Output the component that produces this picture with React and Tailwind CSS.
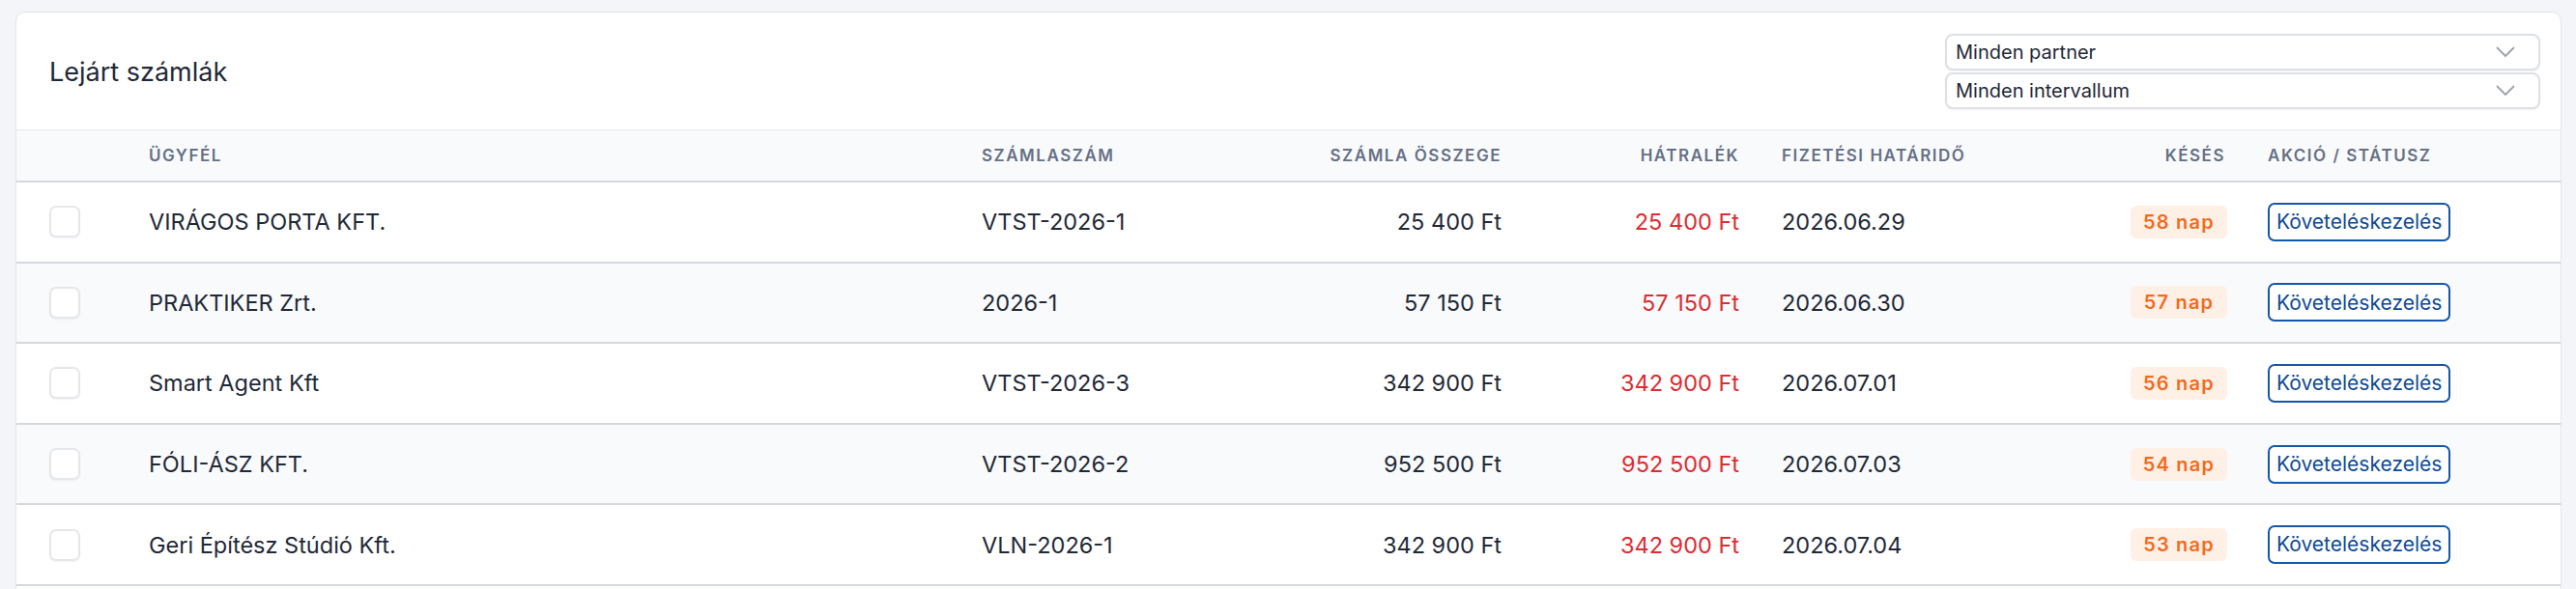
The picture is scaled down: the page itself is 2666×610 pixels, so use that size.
import React from "react";

const rows = [
  { name: "VIRÁGOS PORTA KFT.", num: "VTST-2026-1", amount: "25 400 Ft", due: "25 400 Ft", date: "2026.06.29", late: "58 nap" },
  { name: "PRAKTIKER Zrt.", num: "2026-1", amount: "57 150 Ft", due: "57 150 Ft", date: "2026.06.30", late: "57 nap" },
  { name: "Smart Agent Kft", num: "VTST-2026-3", amount: "342 900 Ft", due: "342 900 Ft", date: "2026.07.01", late: "56 nap" },
  { name: "FÓLI-ÁSZ KFT.", num: "VTST-2026-2", amount: "952 500 Ft", due: "952 500 Ft", date: "2026.07.03", late: "54 nap" },
  { name: "Geri Építész Stúdió Kft.", num: "VLN-2026-1", amount: "342 900 Ft", due: "342 900 Ft", date: "2026.07.04", late: "53 nap" },
];

function Chevron() {
  return (
    <svg width="20" height="12" viewBox="0 0 20 12" fill="none">
      <polyline points="1.5,1.5 10,10 18.5,1.5" stroke="#9ca3af" strokeWidth="1.8" strokeLinecap="round" strokeLinejoin="round" />
    </svg>
  );
}

function Select({ label }) {
  return (
    <div className="flex h-[38px] items-center justify-between rounded-[8px] border-2 border-[#dde0e5] bg-white pl-[9px] pr-[24px] shadow-[0_1px_2px_rgba(0,0,0,0.06)]">
      <span className="text-[20px] text-[#1f2937]">{label}</span>
      <Chevron />
    </div>
  );
}

export default function App() {
  return (
    <div className="min-h-screen bg-[#f4f5f8] pl-[16px] pr-[15px] pt-[12px] font-['Inter',sans-serif]">
      <div className="overflow-hidden rounded-[10px] border border-[#e3e5ea] bg-white">
        <div className="flex items-center justify-between border-b border-[#e5e7eb] pb-[21px] pl-[34px] pr-[21px] pt-[22px]">
          <h2 className="text-[27px] font-normal leading-none text-[#1f2937]">Lejárt számlák</h2>
          <div className="flex w-[616px] flex-col gap-[2px]">
            <Select label="Minden partner" />
            <Select label="Minden intervallum" />
          </div>
        </div>

        <div className="flex h-[54px] items-center border-b-2 border-[#d5d8de] bg-[#f9fafc] pt-[2px] text-[17px] font-semibold uppercase tracking-[0.09em] text-[#667085]">
          <div className="w-[120px] shrink-0" />
          <div className="w-[863px] shrink-0 pl-[17px]">Ügyfél</div>
          <div className="w-[300px] shrink-0 pl-[16px]">Számlaszám</div>
          <div className="w-[274px] shrink-0 pr-[20px] text-right">Számla összege</div>
          <div className="w-[246px] shrink-0 pr-[20px] text-right">Hátralék</div>
          <div className="w-[280px] shrink-0 pl-[24px]">Fizetési határidő</div>
          <div className="w-[225px] shrink-0 pr-[22px] text-right">Késés</div>
          <div className="flex-1 pl-[22px]">Akció / Státusz</div>
        </div>

        {rows.map((r, i) => (
          <div
            key={i}
            className={`flex h-[83.6px] items-center border-b-2 border-[#d5d8de] text-[23.5px] text-[#1f2937] ${i % 2 === 1 ? "bg-[#f9fafc]" : "bg-white"}`}
          >
            <div className="w-[120px] shrink-0 pl-[34px]">
              <div className="h-[33px] w-[32px] rounded-[7px] border-2 border-[#e5e7eb] bg-white shadow-[0_1px_2px_rgba(0,0,0,0.05)]" />
            </div>
            <div className="w-[863px] shrink-0 pl-[17px]">{r.name}</div>
            <div className="w-[300px] shrink-0 pl-[16px]">{r.num}</div>
            <div className="w-[274px] shrink-0 pr-[20px] text-right">{r.amount}</div>
            <div className="w-[246px] shrink-0 pr-[20px] text-right text-[#dc2d32]">{r.due}</div>
            <div className="w-[280px] shrink-0 pl-[24px]">{r.date}</div>
            <div className="flex w-[225px] shrink-0 justify-end pr-[20px]">
              <span className="flex h-[34px] w-[100px] items-center justify-center rounded-[6px] bg-[#fff0e6] text-[20px] font-semibold tracking-[0.06em] text-[#f26b1d]">
                {r.late}
              </span>
            </div>
            <div className="flex-1 pl-[22px]">
              <button className="flex h-[40px] items-center rounded-[7px] border-2 border-[#1557a8] bg-white px-[7px] text-[21px] text-[#0f4a94]">
                Követeléskezelés
              </button>
            </div>
          </div>
        ))}
        <div className="h-[40px]" />
      </div>
    </div>
  );
}
